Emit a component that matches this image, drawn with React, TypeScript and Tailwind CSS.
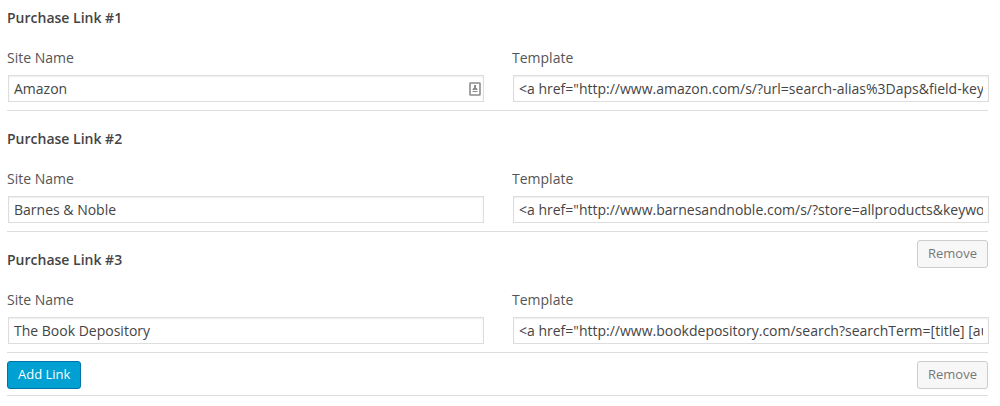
import { useState } from "react";

interface PurchaseLink {
  id: number;
  name: string;
  template: string;
  autofill?: boolean;
}

const initialLinks: PurchaseLink[] = [
  {
    id: 1,
    name: "Amazon",
    template: '<a href="http://www.amazon.com/s/?url=search-alias%3Daps&field-keywords=[title] [author]">Amazon</a>',
    autofill: true,
  },
  {
    id: 2,
    name: "Barnes & Noble",
    template: '<a href="http://www.barnesandnoble.com/s/?store=allproducts&keyword=[title] [author]">Barnes & Noble</a>',
  },
  {
    id: 3,
    name: "The Book Depository",
    template: '<a href="http://www.bookdepository.com/search?searchTerm=[title] [author]">The Book Depository</a>',
  },
];

const inputClass =
  "ml-px block h-[27px] w-full border border-[#ddd] bg-white px-[5px] text-[14px] text-[#444] shadow-[inset_0_1px_2px_rgba(0,0,0,0.07)] outline-none";

const AutofillIcon = () => (
  <svg viewBox="0 0 12 14" className="h-[14px] w-[12px]" fill="none" stroke="#8c8c8c">
    <rect x="1" y="1" width="10" height="12" rx="0.5" strokeWidth="1.6" />
    <path d="M6 3v3" strokeWidth="2" />
    <path d="M4 6.5h4" />
    <path d="M3.5 7.5h5M3.5 9.5h5" />
  </svg>
);

interface RemoveButtonProps {
  onClick: () => void;
}

const RemoveButton = ({ onClick }: RemoveButtonProps) => (
  <button
    type="button"
    onClick={onClick}
    className="h-7 rounded-[3px] border border-[#ccc] bg-[#f7f7f7] px-[10px] text-[13px] text-[#777]"
  >
    Remove
  </button>
);

interface LinkFieldsProps {
  link: PurchaseLink;
  onChange: (link: PurchaseLink) => void;
}

const LinkFields = ({ link, onChange }: LinkFieldsProps) => (
  <div className="grid grid-cols-2 gap-[29px] pb-2">
    <div>
      <label htmlFor={`name-${link.id}`} className="block pb-[7px] leading-5">
        Site Name
      </label>
      <div className="relative">
        <input
          id={`name-${link.id}`}
          type="text"
          value={link.name}
          onChange={e => onChange({ ...link, name: e.target.value })}
          className={inputClass}
        />
        {link.autofill && (
          <span className="absolute inset-y-0 right-[2px] flex items-center">
            <AutofillIcon />
          </span>
        )}
      </div>
    </div>
    <div>
      <label htmlFor={`template-${link.id}`} className="block pb-[7px] leading-5">
        Template
      </label>
      <input
        id={`template-${link.id}`}
        type="text"
        value={link.template}
        onChange={e => onChange({ ...link, template: e.target.value })}
        className={inputClass}
      />
    </div>
  </div>
);

export default function App() {
  const [links, setLinks] = useState(initialLinks);

  const updateLink = (link: PurchaseLink) => setLinks(links.map(l => (l.id === link.id ? link : l)));
  const removeLink = (id: number) => setLinks(links.filter(l => l.id !== id));
  const addLink = () => setLinks([...links, { id: Date.now(), name: "", template: "" }]);

  const last = links[links.length - 1];

  return (
    <form className="bg-white pr-3 pl-[7px] font-['Open_Sans',sans-serif] text-[14px] text-[#555]">
      {links.map((link, index) => (
        <section key={link.id} className="group border-b border-[#ddd]">
          <div className="flex h-[58px] items-start justify-between pt-2 group-first:h-12 group-first:pt-0">
            <h2 className="pt-[10px] text-[14px] leading-5 font-semibold text-[#444] group-first:pt-2">
              Purchase Link #{index + 1}
            </h2>
            {index > 1 && <RemoveButton onClick={() => removeLink(links[index - 1].id)} />}
          </div>
          <LinkFields link={link} onChange={updateLink} />
        </section>
      ))}
      <div className="flex items-start justify-between border-b border-[#ddd] pt-2 pb-[6px]">
        <button
          type="button"
          onClick={addLink}
          className="h-7 rounded-[3px] border border-[#0073aa] bg-[#00a0d2] px-[10px] text-[13px] text-white"
        >
          Add Link
        </button>
        {last && <RemoveButton onClick={() => removeLink(last.id)} />}
      </div>
    </form>
  );
}
